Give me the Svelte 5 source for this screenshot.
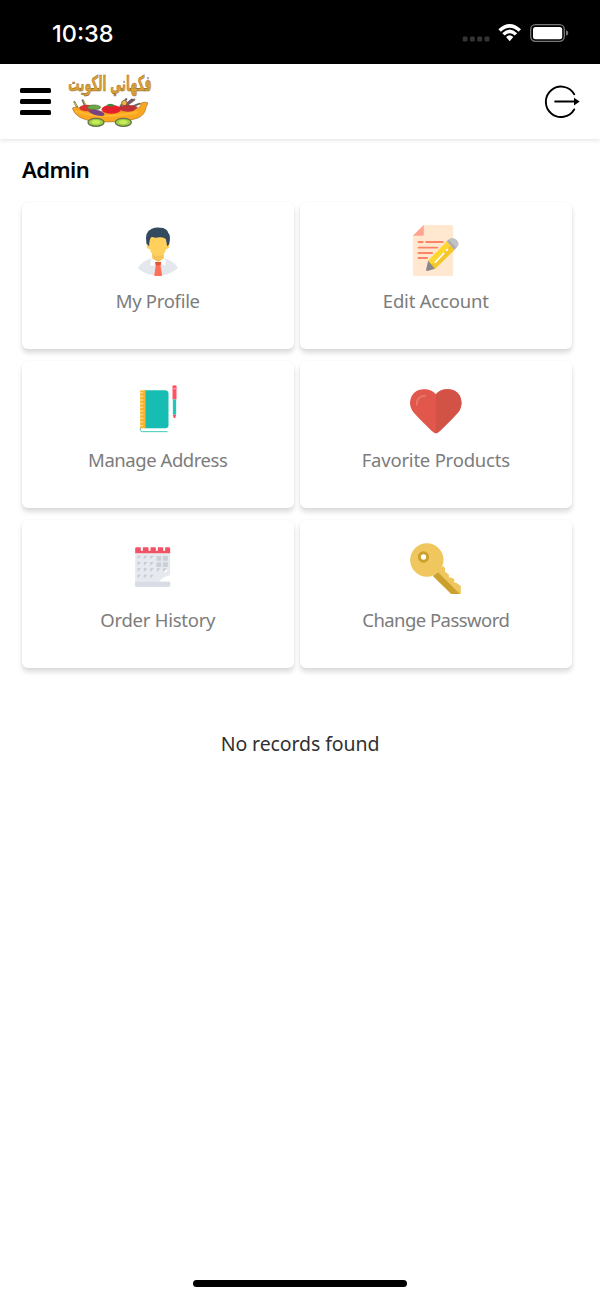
<script>
  const cards = [
    { label: 'My Profile', icon: profile, viewBox: '-5.5 0 240 210', spacing: -0.3 },
    { label: 'Edit Account', icon: edit, viewBox: '-11.5 0 240 210', spacing: -0.2 },
    { label: 'Manage Address', icon: address, viewBox: '-5.5 -4 240 210', spacing: -0.45 },
    { label: 'Favorite Products', icon: heart, viewBox: '-11.5 -4 240 210', spacing: -0.22 },
    { label: 'Order History', icon: calendar, viewBox: '-5.5 -5 240 210', spacing: -0.25 },
    { label: 'Change Password', icon: key, viewBox: '-11.5 -5 240 210', spacing: -0.55 }
  ]

  const spirals = [52, 63, 74, 85, 96, 107, 118, 129, 140, 151]
  const days = [
    [58, 69], [77, 69], [96, 69],
    [58, 88], [77, 88], [96, 88],
    [58, 107], [77, 107], [96, 107], [116, 107], [135, 107],
    [58, 126], [77, 126], [96, 126]
  ]
</script>

{#snippet profile()}
  <path d="M54 160 Q62 140 96 130 H134 Q164 139 174 159 Q150 182 114 182 Q78 182 54 160Z" fill="#e4e8ed" />
  <path d="M97 112 H132 V130 Q127 141 114 141 Q102 141 97 130Z" fill="#f6c358" />
  <path d="M88 59 H140 V83 Q150 83 149 94 Q147 104 139 102 Q133 124 114 124 Q96 124 90 102 Q82 103 80 93 Q80 84 88 83Z" fill="#ffd15c" />
  <path d="M80 86 Q73 49 96 41 Q109 35 130 39 Q143 44 145 53 Q154 61 148 88 L142 94 L138 72 Q131 66 119 67 Q105 70 96 65 Q88 70 88 94Z" fill="#334a5e" />
  <path d="M95 129 L115 141 L134 129 L138 138 L136 153 L115 141 L100 153 L90 150Z" fill="#fbfcfc" />
  <path d="M106 141 H124 L122 151 L127 182 Q115 184 103 182 L108 151Z" fill="#ff7058" />
  <path d="M106 141 H124 L122 151 H108Z" fill="#e4573d" />
{/snippet}

{#snippet edit()}
  <path d="M72 30 H154 Q160 30 160 36 V177 Q160 183 154 183 H45 Q39 183 39 177 V62Z" fill="#ffe8cf" />
  <path d="M72 30 V58 Q72 62 68 62 H39Z" fill="#ffa491" />
  <path d="M56 81 H69 M79 81 H129 M56 98 H113 M56 114 H97 M56 129 H82" stroke="#ff8465" stroke-width="5.5" stroke-linecap="round" />
  <path d="M83 139 L141 79 L164 104 L105 162Z" fill="#ffd630" />
  <path d="M93 150 L153 90 L164 104 L105 162Z" fill="#f5c629" />
  <path d="M141 79 L149 71 Q160 65 171 75 Q181 87 172 96 L164 104Z" fill="#c2c1c6" />
  <path d="M141 79 L146 74 L169 98 L164 104Z" fill="#acabb1" />
  <path d="M85 137 L105 161 L83 168 Q77 168 79 162Z" fill="#89888e" />
  <path d="M106 142 L132 115 M140 106 L143 103" stroke="#fff" stroke-width="5" stroke-linecap="round" />
{/snippet}

{#snippet address()}
  <path d="M62 158 Q58 169 68 169 H142" fill="none" stroke="#40c9bb" stroke-width="3" stroke-linecap="round" />
  <path d="M74 45 H136 Q146 46 146 56 V150 Q146 159 136 159 H74Z" fill="#17bdb2" />
  <path d="M61 45 H77 V159 H61Z" fill="#fcb32b" />
  {#each spirals as y}
    <path d="M61 {y} h9" stroke="#ffe7a9" stroke-width="3" />
  {/each}
  <path d="M158 33 Q158 30 164 30 Q170 30 170 33 V72 H158Z" fill="#ff5364" />
  <path d="M158 40 H170" stroke="#ffa0a9" stroke-width="3" />
  <path d="M159 72 H169 V118 H159Z" fill="#20c7bb" />
  <path d="M159 118 H169 L166 128 H162Z" fill="#f14c5d" />
{/snippet}

{#snippet heart()}
  <path d="M108 57 Q93 40 70 42 Q47 43 36 61 Q25 82 36 104 Q44 117 95 166 Q104 174 108 174 Q112 174 121 166 Q172 117 180 104 Q190 82 180 61 Q169 43 146 42 Q123 40 108 57Z" fill="#e2574c" />
  <path d="M108 57 Q123 40 146 42 Q169 43 180 61 Q190 82 180 104 Q172 117 121 166 Q112 174 108 174Z" fill="#d25246" />
  <path d="M51 89 C49 71 61 61 77 61" fill="none" stroke="#e9776d" stroke-width="5" stroke-linecap="round" />
{/snippet}

{#snippet calendar()}
  <path d="M46 56 H151 V122 Q128 127 117 141 H151 V152 Q151 156 147 156 H50 Q46 156 46 152Z" fill="#e6e9ee" />
  <path d="M46 141 H151 V152 Q151 156 147 156 H50 Q46 156 46 152Z" fill="#d8dce4" />
  <path d="M46 42 Q46 38 50 38 H147 Q151 38 151 42 V56 H46Z" fill="#f05365" />
  {#each [66, 89, 111, 133] as x}
    <path d="M{x} 38 v8" stroke="#fff" stroke-width="6" stroke-linecap="round" />
  {/each}
  {#each days as [x, y]}
    <path d="M{x - 5} {y - 6} h11 l-11 11z" fill="#c7cbd5" />
  {/each}
  <path d="M110 64 h14 v14 h-14z M129 64 h15 v14 h-15z M110 83 h14 v14 h-14z M129 83 h15 v14 h-15z" fill="#cbcfd8" />
  <path d="M131 113 L141 103 V109 Q141 113 137 113Z" fill="#fff" />
{/snippet}

{#snippet key()}
  <path d="M112 111 L130 94 L136 101 Q135 108 136 111 L146 119 Q148 125 147 129 Q158 127 163 134 Q165 139 162 143 Q172 143 174 148 L183 154 V178 H178Z" fill="#efc75e" />
  <path d="M99 124 L114 112 L180 178 H154Z" fill="#cba12e" />
  <circle cx="81" cy="76" r="50" fill="#efc75e" />
  <circle cx="71" cy="67" r="12.5" fill="#fff" stroke="#cba12e" stroke-width="9" />
{/snippet}

<div class="screen">
  <div class="status">
    <span class="time">10:38</span>
    <svg class="indicators" viewBox="0 0 108 24" width="108" height="24">
      <g fill="#343434">
        {#each [0.7, 8, 15.3, 22.6] as x}
          <rect {x} y="14.4" width="4.8" height="5.2" rx="1.3" />
        {/each}
      </g>
      <path d="M36.4 7.3 Q47.7 -3.3 59 7.3 L56.6 9.8 Q47.7 1.7 38.8 9.8Z M40.2 11.2 Q47.7 4 55.2 11.2 L52.7 13.6 Q47.7 9.1 42.7 13.6Z M44.1 15 Q47.7 11.7 51.3 15 L47.7 19.3Z" fill="#fff" />
      <rect x="68.7" y="2.7" width="33.6" height="16.6" rx="4.7" fill="none" stroke="#777" stroke-width="1.3" />
      <rect x="71" y="5" width="29.2" height="12.2" rx="2.5" fill="#fff" />
      <path d="M104 8.2 Q106.3 9 106.3 11 Q106.3 13 104 13.8Z" fill="#777" />
    </svg>
  </div>

  <header>
    <div class="menu"><span></span><span></span><span></span></div>
    <svg class="logo" viewBox="0 0 300 198" width="100" height="66">
      <text transform="translate(150 74) scale(0.85 1.6)" text-anchor="middle" direction="rtl">فكهاني الكويت</text>
      <path d="M51 122 L43 108 M76 122 L68 103 M181 121 L199 99 M193 123 L223 101 M210 124 L239 113" stroke="#6d6862" stroke-width="6" stroke-linecap="round" />
      <path d="M51 121 L43 109 M79 121 L71 104" stroke="#b8bd55" stroke-width="4" />
      <path d="M187 124 L216 101" stroke="#77536f" stroke-width="7" stroke-linecap="round" />
      <circle cx="193" cy="111" r="8" fill="#edb449" stroke="#77522f" stroke-width="2" />
      <path d="M37 127 Q40 122 50 124 Q135 148 228 128 Q245 124 242 112 Q252 106 263 110 Q262 118 258 124 Q255 147 234 156 Q190 172 104 166 Q48 161 37 127Z" fill="#fba620" stroke="#a1742d" stroke-width="2" />
      <path d="M46 135 Q126 163 232 138" fill="none" stroke="#ffb92f" stroke-width="6" />
      <ellipse cx="80" cy="126" rx="22" ry="10" fill="#d53532" />
      <ellipse cx="102" cy="124" rx="20" ry="7" fill="#69a844" stroke="#52703a" stroke-width="2" />
      <path d="M84 135 Q107 123 132 141 Q137 151 123 150 Q98 148 84 135Z" fill="#764380" />
      <path d="M174 124 Q205 111 234 123 L220 135 Q200 140 180 133Z" fill="#bc3237" />
      <ellipse cx="154" cy="130" rx="29" ry="13" fill="#e6202b" />
      <path d="M138 118 Q151 108 165 118 Q154 125 138 118Z" fill="#3b873d" />
      {#each [108, 190] as x}
        <ellipse cx={x} cy="169" rx="24" ry="12" fill="#9fcf43" stroke="#66714c" stroke-width="4" />
        <ellipse cx={x} cy="168" rx="13" ry="6" fill="#c3ec59" />
      {/each}
    </svg>
    <svg class="logout" viewBox="0 0 36 34" width="36" height="34">
      <path d="M30.2 9.2 A15.2 15.2 0 1 0 30.2 24.4" fill="none" stroke="#000" stroke-width="1.9" stroke-linecap="round" />
      <path d="M11.2 16.6 H31" stroke="#000" stroke-width="2" stroke-linecap="round" />
      <path d="M30 12.8 L35.7 16.6 L30 20.4Z" />
    </svg>
  </header>

  <main>
    <h1>Admin</h1>
    <div class="cards">
      {#each cards as card}
        <div class="card">
          <svg class="icon" viewBox={card.viewBox} width="80" height="70">{@render card.icon()}</svg>
          <span class="label" style="letter-spacing: {card.spacing}px">{card.label}</span>
        </div>
      {/each}
    </div>
    <p>No records found</p>
  </main>

  <div class="home-bar"></div>
</div>

<style>
  :global(body) {
    background: #fff;
  }

  .screen {
    display: flex;
    flex-direction: column;
    width: 600px;
    height: 1299px;
    font-family: 'Noto Sans', sans-serif;
  }

  svg {
    display: block;
    flex: none;
  }

  .status {
    display: flex;
    align-items: center;
    justify-content: space-between;
    box-sizing: border-box;
    height: 64px;
    padding: 0 30px 0 52px;
    background: #000;
  }

  .time {
    padding-top: 3px;
    color: #fff;
    font: 500 23.5px/28px Inter, sans-serif;
  }

  .indicators {
    padding-top: 3px;
  }

  header {
    display: flex;
    align-items: flex-start;
    box-sizing: border-box;
    height: 75px;
    padding: 2px 20px 0;
    background: #fff;
    box-shadow: 0 1px 4px rgba(30, 30, 0, 0.14);
  }

  .menu {
    display: flex;
    flex-direction: column;
    gap: 6px;
    width: 31px;
    padding-top: 22px;
  }

  .menu span {
    height: 5px;
    border-radius: 1.5px;
    background: #000;
  }

  .logo {
    margin-left: 9px;
  }

  .logo text {
    font: bold 40px 'DejaVu Sans', sans-serif;
    fill: #dda032;
    stroke: #987036;
    stroke-width: 1.2px;
  }

  .logout {
    margin: 19px 0 0 auto;
  }

  main {
    flex: 1;
    padding: 16px 28px 0 22px;
  }

  h1 {
    margin: 0 0 18.5px;
    color: #000;
    font-size: 22px;
    font-weight: 600;
    line-height: 28px;
    letter-spacing: -0.55px;
  }

  .cards {
    display: grid;
    grid-template-columns: 271.5px 271.5px;
    grid-auto-rows: 147.5px;
    gap: 11.9px 6.5px;
  }

  .card {
    display: flex;
    flex-direction: column;
    align-items: center;
    box-sizing: border-box;
    padding-top: 13px;
    border-radius: 6px;
    background: #fff;
    box-shadow: 0 4px 5px rgba(0, 0, 0, 0.14), 0 0 2px rgba(0, 0, 0, 0.05);
  }

  .label {
    margin-top: 2.3px;
    color: #7c7c7c;
    font-size: 18.5px;
    line-height: 28px;
    white-space: nowrap;
  }

  p {
    margin: 62px -6px 0 0;
    color: #303030;
    font-size: 19.5px;
    line-height: 28px;
    letter-spacing: -0.1px;
    text-align: center;
  }

  .home-bar {
    align-self: center;
    width: 214px;
    height: 7px;
    margin-bottom: 12px;
    border-radius: 4px;
    background: #000;
  }
</style>
